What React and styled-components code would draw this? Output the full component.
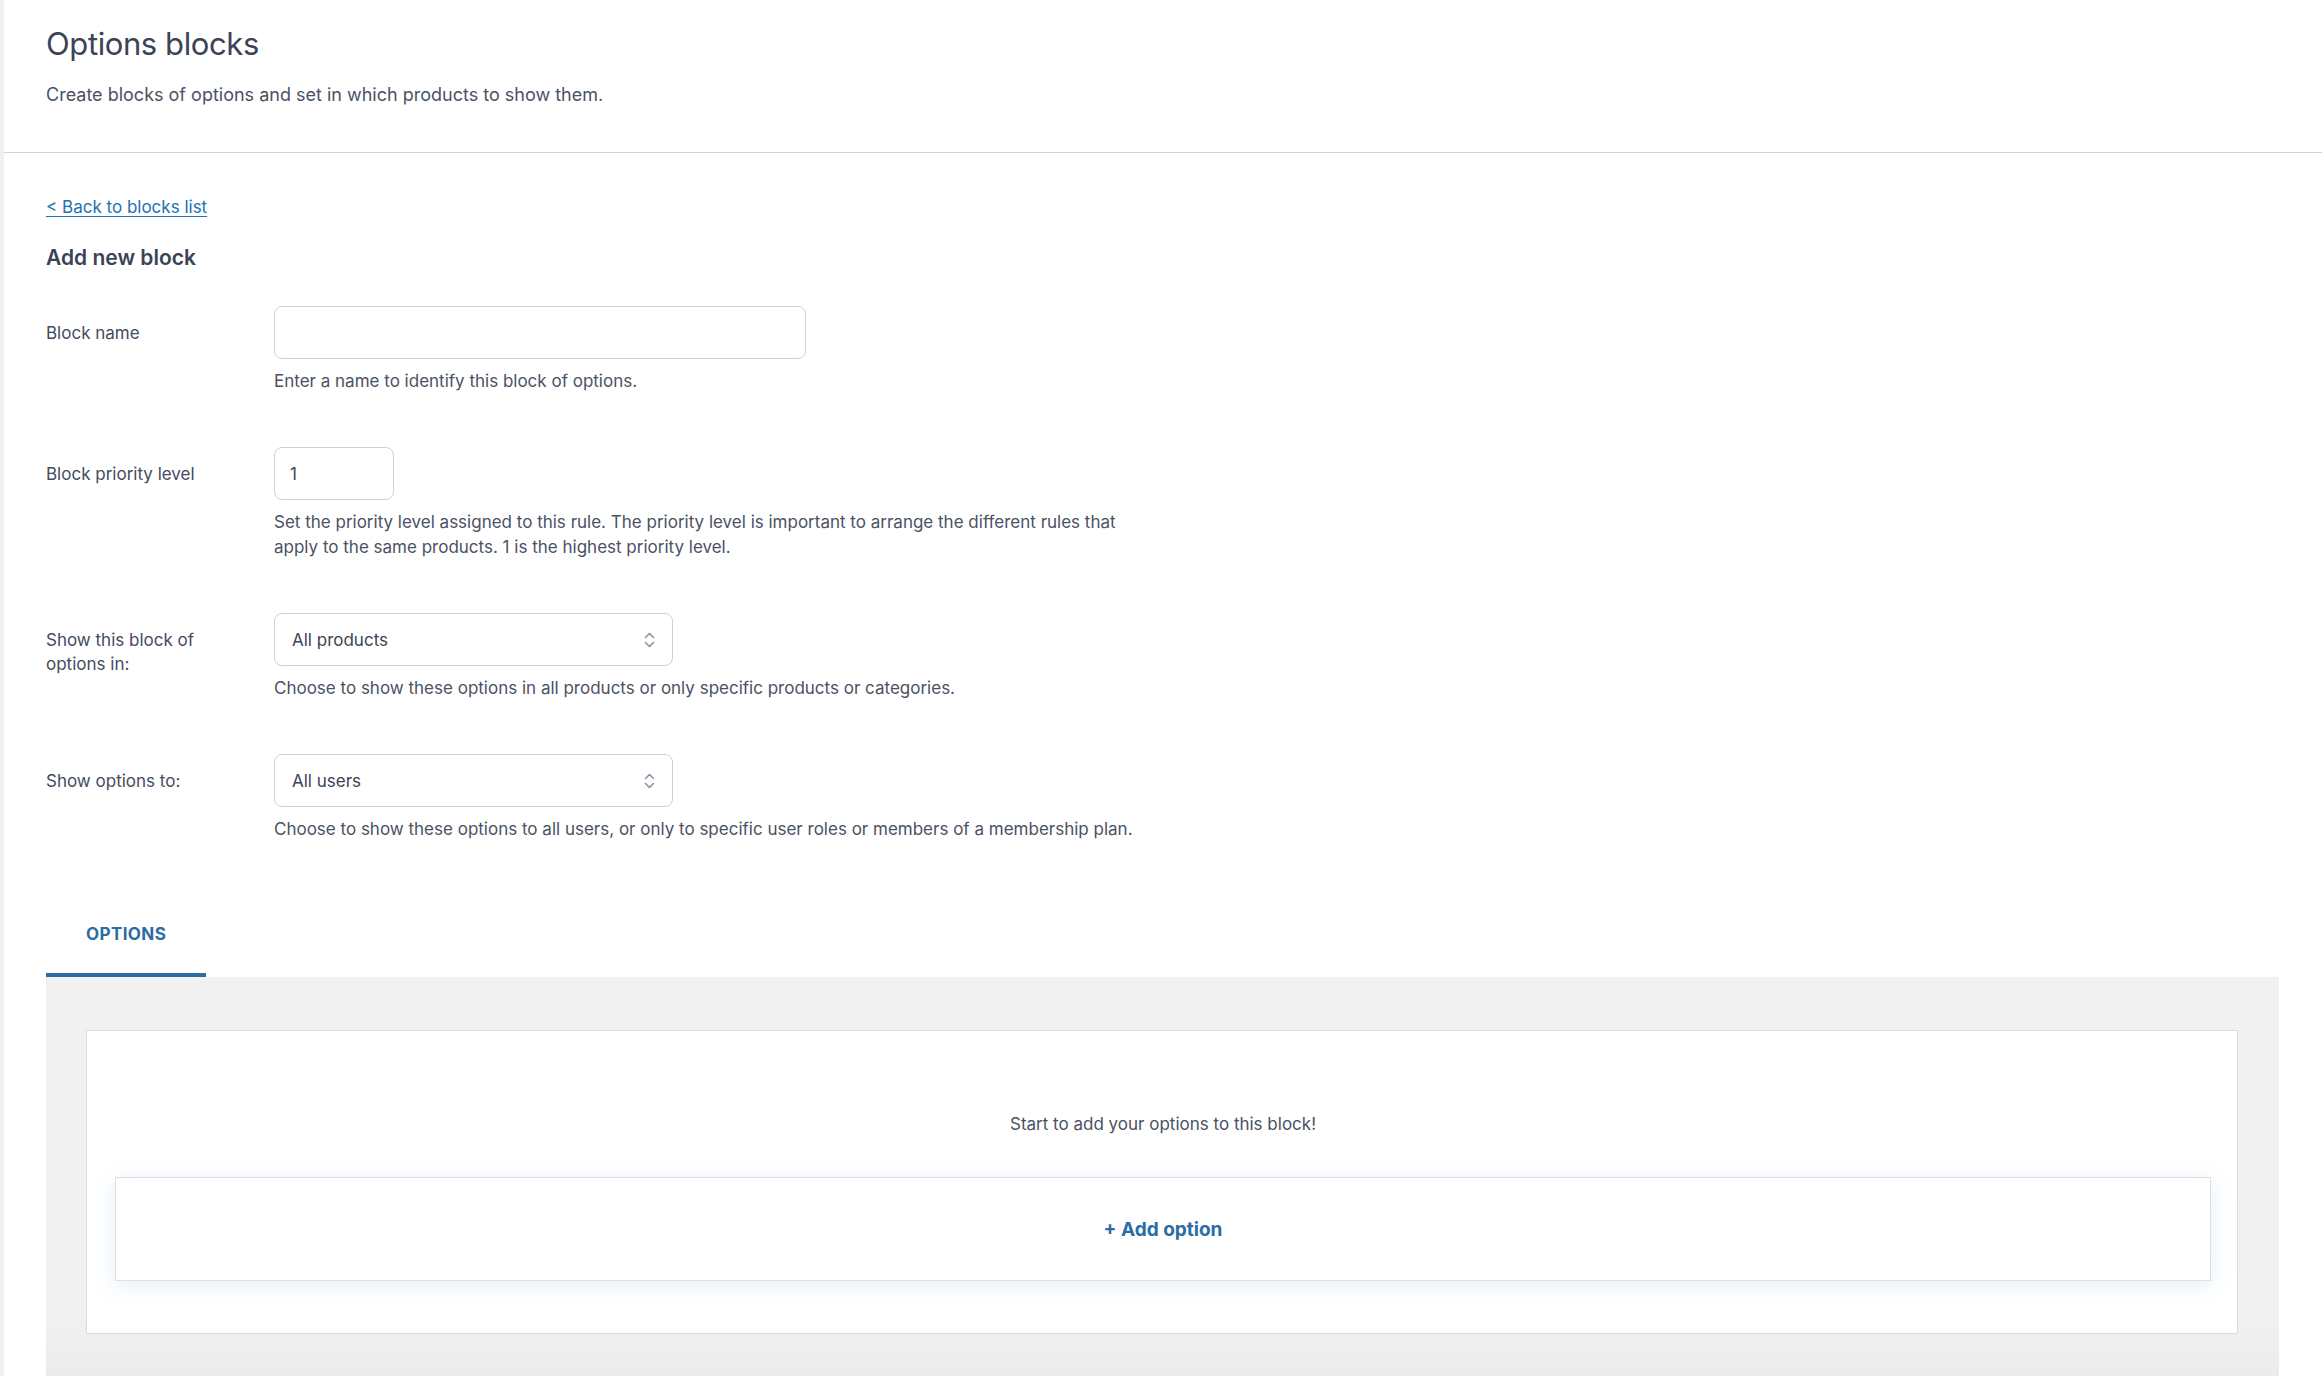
import React from "react";
import styled, { createGlobalStyle } from "styled-components";

const GlobalStyle = createGlobalStyle`
  html, body {
    margin: 0;
    padding: 0;
    background: #ffffff;
  }
  body {
    font-family: Inter, "Noto Sans", "Liberation Sans", sans-serif;
    color: #4a5264;
    -webkit-font-smoothing: antialiased;
  }
  * {
    box-sizing: border-box;
  }
`;

const Page = styled.div`
  min-height: 1376px;
  border-left: 4px solid #eef0f3;
  display: flex;
  flex-direction: column;
`;

const Header = styled.header`
  padding: 24px 42px 44px;
  border-bottom: 1px solid #cdd4df;
`;

const Title = styled.h1`
  margin: 0;
  font-size: 31px;
  line-height: 40px;
  font-weight: 400;
  color: #3b4455;
  letter-spacing: -0.4px;
`;

const Subtitle = styled.p`
  margin: 18px 0 0;
  font-size: 18px;
  line-height: 26px;
  color: #4a5264;
`;

const Content = styled.main`
  flex: 1;
  display: flex;
  flex-direction: column;
  align-items: flex-start;
  padding: 42px 43px 0 42px;
`;

const BackLink = styled.a`
  font-size: 17px;
  line-height: 24px;
  color: #2271b1;
  text-decoration: underline;
  text-underline-offset: 3px;
`;

const SectionTitle = styled.h2`
  margin: 25px 0 0;
  font-size: 21px;
  line-height: 28px;
  font-weight: 600;
  color: #3b4455;
`;

const Form = styled.div`
  margin-top: 34px;
  display: flex;
  flex-direction: column;
  gap: 53px;
  width: 100%;
`;

const FieldRow = styled.div`
  display: grid;
  grid-template-columns: 228px 1fr;
`;

const Label = styled.label`
  padding-top: 15px;
  max-width: 180px;
  font-size: 17px;
  line-height: 24px;
  color: #434c5e;
`;

const Field = styled.div`
  display: flex;
  flex-direction: column;
  align-items: flex-start;
`;

const TextInput = styled.input`
  width: ${(p) => p.$width}px;
  height: 53px;
  padding: 0 15px;
  border: 1px solid #c9d1dc;
  border-radius: 8px;
  background: #fff;
  font-family: inherit;
  font-size: 17px;
  color: #3b4455;
  outline: none;
`;

const SelectWrap = styled.div`
  position: relative;
  width: 399px;
`;

const Select = styled.select`
  width: 100%;
  height: 53px;
  padding: 0 40px 0 17px;
  border: 1px solid #c9d1dc;
  border-radius: 8px;
  background: #fff;
  font-family: inherit;
  font-size: 17px;
  color: #3b4455;
  appearance: none;
  -webkit-appearance: none;
  outline: none;
`;

const Chevrons = styled.svg`
  position: absolute;
  right: 17px;
  top: 50%;
  transform: translateY(-50%);
  pointer-events: none;
`;

const Help = styled.p`
  margin: 10px 0 0;
  max-width: 880px;
  font-size: 17px;
  line-height: 25px;
  color: #4a5264;
`;

const TabList = styled.div`
  margin-top: 62px;
  display: flex;
`;

const Tab = styled.button`
  padding: 20px 40px 29px;
  border: 0;
  border-bottom: 4px solid ${(p) => (p.$active ? "#2b6ca3" : "transparent")};
  background: none;
  font-family: inherit;
  font-size: 17px;
  line-height: 20px;
  font-weight: 700;
  letter-spacing: 0.4px;
  color: #2b6ca3;
  cursor: pointer;
`;

const TabPanel = styled.section`
  flex: 1;
  align-self: stretch;
  padding: 53px 41px 42px 40px;
  background: linear-gradient(#f1f1f1 0, #f1f1f1 calc(100% - 60px), #ebebeb 100%);
`;

const EmptyBox = styled.div`
  padding: 81px 26px 52px 28px;
  border: 1px solid #dcdcdc;
  background: #fff;
  display: flex;
  flex-direction: column;
  align-items: center;
`;

const EmptyText = styled.p`
  margin: 0;
  font-size: 17px;
  line-height: 24px;
  color: #4a5264;
`;

const AddOption = styled.button`
  margin-top: 41px;
  width: 100%;
  height: 104px;
  border: 1px solid #dcdfe3;
  background: #fff;
  box-shadow: 0 4px 22px rgba(40, 120, 200, 0.13);
  font-family: inherit;
  font-size: 19px;
  font-weight: 700;
  color: #2b6ca3;
  cursor: pointer;
`;

const SelectField = ({ value }) => (
  <SelectWrap>
    <Select defaultValue={value}>
      <option>{value}</option>
    </Select>
    <Chevrons width="13" height="17" viewBox="0 0 13 17" fill="none">
      <path d="M2.5 6 L6.5 2 L10.5 6" stroke="#8a93a6" strokeWidth="1.6" strokeLinecap="round" strokeLinejoin="round" />
      <path d="M2.5 11 L6.5 15 L10.5 11" stroke="#8a93a6" strokeWidth="1.6" strokeLinecap="round" strokeLinejoin="round" />
    </Chevrons>
  </SelectWrap>
);

const App = () => {
  return (
    <Page>
      <GlobalStyle />
      <Header>
        <Title>Options blocks</Title>
        <Subtitle>Create blocks of options and set in which products to show them.</Subtitle>
      </Header>
      <Content>
        <BackLink href="#">&lt; Back to blocks list</BackLink>
        <SectionTitle>Add new block</SectionTitle>
        <Form>
          <FieldRow>
            <Label>Block name</Label>
            <Field>
              <TextInput $width={532} />
              <Help>Enter a name to identify this block of options.</Help>
            </Field>
          </FieldRow>
          <FieldRow>
            <Label>Block priority level</Label>
            <Field>
              <TextInput $width={120} defaultValue="1" />
              <Help>
                Set the priority level assigned to this rule. The priority level is important to arrange the different
                rules that apply to the same products. 1 is the highest priority level.
              </Help>
            </Field>
          </FieldRow>
          <FieldRow>
            <Label>Show this block of options in:</Label>
            <Field>
              <SelectField value="All products" />
              <Help>Choose to show these options in all products or only specific products or categories.</Help>
            </Field>
          </FieldRow>
          <FieldRow>
            <Label>Show options to:</Label>
            <Field>
              <SelectField value="All users" />
              <Help>
                Choose to show these options to all users, or only to specific user roles or members of a membership
                plan.
              </Help>
            </Field>
          </FieldRow>
        </Form>
        <TabList>
          <Tab $active>OPTIONS</Tab>
        </TabList>
        <TabPanel>
          <EmptyBox>
            <EmptyText>Start to add your options to this block!</EmptyText>
            <AddOption>+ Add option</AddOption>
          </EmptyBox>
        </TabPanel>
      </Content>
    </Page>
  );
};

export default App;
